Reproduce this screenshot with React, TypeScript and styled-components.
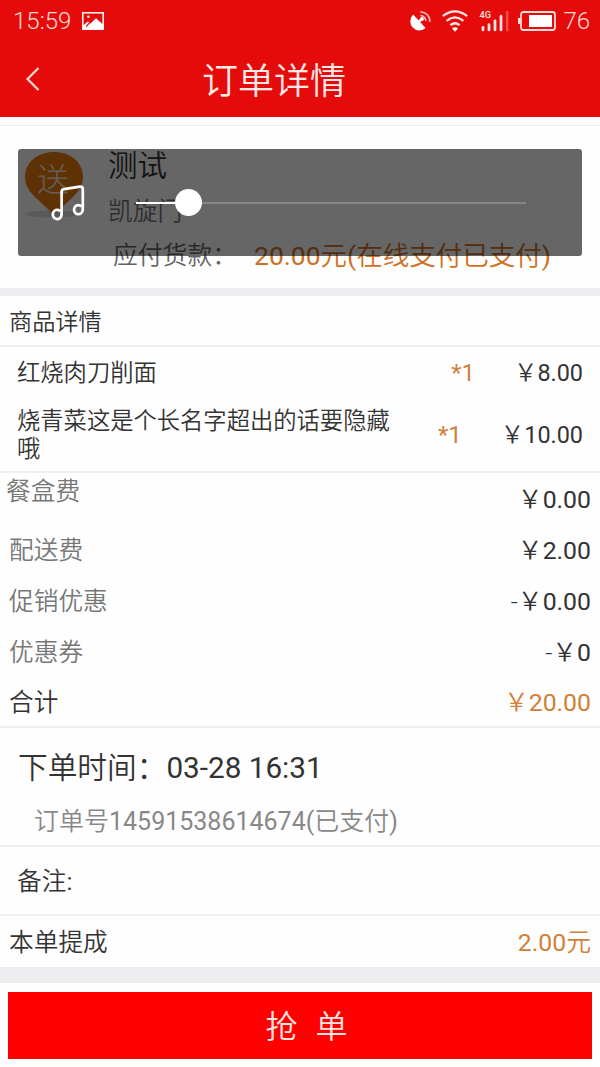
import React from "react";
import styled, { createGlobalStyle } from "styled-components";

const GlobalStyle = createGlobalStyle`
  * { box-sizing: border-box; }
  body {
    margin: 0;
    background: #fefefe;
    font-family: Roboto, "Noto Sans CJK SC", sans-serif;
    font-weight: 350;
    color: #333;
  }
`;

const Screen = styled.main`
  width: 600px;
  height: 1067px;
  display: flex;
  flex-direction: column;
  overflow: hidden;
`;

const Header = styled.header`
  height: 117px;
  flex: none;
  background: #e60b0b;
  color: #ffe9e6;
`;

const StatusBar = styled.div`
  height: 42px;
  display: flex;
  align-items: center;
  padding: 0 10px 0 13px;
`;

const StatusText = styled.span<{ $gap?: number }>`
  font-size: 24px;
  line-height: 42px;
  font-weight: 300;
  margin-left: ${(p) => p.$gap ?? 0}px;
  color: #ffdcd8;
`;

const StatusIcons = styled.div`
  display: flex;
  align-items: center;
  margin-left: auto;
`;

const Icon = styled.svg<{ $left?: number }>`
  display: block;
  flex: none;
  overflow: visible;
  margin-left: ${(p) => p.$left ?? 0}px;
`;

const TitleBar = styled.div`
  height: 75px;
  display: grid;
  grid-template-columns: 100px 1fr 152px;
  align-items: center;
  padding-bottom: 2px;
`;

const Title = styled.h1`
  margin: 0;
  padding-top: 7px;
  text-align: center;
  font-size: 36px;
  line-height: 66px;
  font-weight: 350;
`;

const Customer = styled.section`
  height: 163px;
  flex: none;
  margin-top: 8px;
  border-top: 1px solid #ebebf0;
  position: relative;
  display: grid;
  grid-template-columns: 108px 1fr;
`;

const PinCell = styled.div`
  padding: 25px 0 0 24px;
`;

const CustomerInfo = styled.div`
  display: flex;
  flex-direction: column;
  padding-top: 20px;
`;

const Text = styled.div<{ $size: number; $height: number; $color?: string; $indent?: number }>`
  font-size: ${(p) => p.$size}px;
  line-height: ${(p) => p.$height}px;
  color: ${(p) => p.$color ?? "#333"};
  padding-left: ${(p) => p.$indent ?? 0}px;
  white-space: nowrap;
`;

const Digits = styled.span`
  font-weight: 400;
`;

const Due = styled.div`
  display: flex;
  margin-top: 1px;
`;

const VolumePanel = styled.div`
  position: absolute;
  left: 18px;
  top: 23px;
  width: 564px;
  height: 107px;
  border-radius: 3px;
  background: rgba(0, 0, 0, 0.6);
  display: flex;
  align-items: center;
  padding-left: 33px;
`;

const Track = styled.div`
  width: 390px;
  height: 2px;
  margin-left: 51px;
  background: #858585;
  display: flex;
  align-items: center;
`;

const Filled = styled.div`
  width: 39px;
  height: 2px;
  background: #fff;
`;

const Knob = styled.div`
  width: 27px;
  height: 27px;
  border-radius: 50%;
  background: #fff;
`;

const Band = styled.div<{ $height: number }>`
  height: ${(p) => p.$height}px;
  flex: none;
  background: #eeeef1;
`;

const Section = styled.section<{ $height: number; $line?: boolean }>`
  height: ${(p) => p.$height}px;
  flex: none;
  border-bottom: ${(p) => (p.$line === false ? "none" : "2px solid #efefef")};
`;

const Item = styled.div<{ $height: number }>`
  height: ${(p) => p.$height}px;
  display: flex;
  align-items: center;
  padding: 0 17px;
`;

const ItemName = styled.div`
  width: 388px;
  font-size: 23.3px;
  line-height: 28px;
`;

const Quantity = styled.div`
  margin-left: auto;
  font-size: 24px;
  line-height: 28px;
  font-weight: 400;
  color: #cf8141;
`;

const ItemPrice = styled.div`
  margin-left: 39px;
  font-size: 23.4px;
  line-height: 28px;
`;

const Row = styled.div<{ $height: number; $left?: number }>`
  height: ${(p) => p.$height}px;
  display: flex;
  align-items: center;
  justify-content: space-between;
  padding: 0 9px 0 ${(p) => p.$left ?? 9}px;
`;

const Label = styled.span<{ $dark?: boolean; $raise?: number }>`
  font-size: 24.7px;
  line-height: 30px;
  color: ${(p) => (p.$dark ? "#333" : "#777")};
  padding-bottom: ${(p) => p.$raise ?? 0}px;
`;

const Amount = styled.span<{ $accent?: boolean }>`
  font-size: 24.8px;
  line-height: 30px;
  color: ${(p) => (p.$accent ? "#d08038" : "#333")};
`;

const GrabButton = styled.button`
  width: 584px;
  height: 67px;
  flex: none;
  margin: 9px 8px 0;
  padding: 4px 0 0 13px;
  border: 0;
  background: #fe0000;
  color: #ffe5e2;
  font: 350 32px/63px Roboto, "Noto Sans CJK SC", sans-serif;
  word-spacing: 10px;
`;

const items = [
  { name: "红烧肉刀削面", count: "*1", price: "8.00", height: 51 },
  { name: "烧青菜这是个长名字超出的话要隐藏哦", count: "*1", price: "10.00", height: 74 },
];

const fees = [
  { label: "配送费", sign: "", amount: "2.00" },
  { label: "促销优惠", sign: "-", amount: "0.00" },
  { label: "优惠券", sign: "-", amount: "0" },
];

const PictureIcon = () => (
  <Icon $left={11} width="22" height="18" viewBox="0 0 22 18">
    <rect x="0.8" y="0.8" width="20.4" height="16.4" fill="none" stroke="#fff" strokeWidth="1.5" />
    <circle cx="6.4" cy="4.8" r="1.3" fill="#ffe4e0" />
    <path d="M1 17V13.6L6 9.4L8.5 11.5L14 6.2L21 12.6V17Z" fill="#fff" />
    <path d="M4.2 14.5L8 10.4" stroke="#e60b0b" strokeWidth="1.3" />
  </Icon>
);

const SatelliteIcon = () => (
  <Icon width="21" height="21" viewBox="0 0 21 21">
    <path d="M3.2 3.6A9 9 0 1 0 15.6 17Z" fill="#fff" />
    <path d="M8.5 11L12 7.8" stroke="#fff" strokeWidth="2.4" />
    <circle cx="12" cy="8" r="1.9" fill="#fff" />
    <path d="M10.5 4.4A5.6 5.6 0 0 1 15.8 10M10.3 0.9A9 9 0 0 1 19.8 10.8" fill="none" stroke="#ffc3be" strokeWidth="1.5" />
  </Icon>
);

const WifiIcon = () => (
  <Icon $left={11} width="26" height="22" viewBox="0 0 26 22">
    <g fill="none" stroke="#ffe7e4" strokeWidth="2.3">
      <path d="M0.8 6.2Q13 -3.4 25.2 6.2" />
      <path d="M4.6 10.8Q13 4 21.4 10.8" />
      <path d="M8.4 15.2Q13 11.4 17.6 15.2" />
    </g>
    <path d="M10 18.4Q13 16.2 16 18.4L13 21.8Z" fill="#fff" />
  </Icon>
);

const SignalIcon = () => (
  <Icon $left={12} width="29" height="22" viewBox="0 0 29 22">
    <text x="-0.5" y="8" fontSize="9.2" fontWeight="500" fill="#ffe7e4">4G</text>
    <g stroke="#ffe7e4" strokeWidth="2.7" strokeLinecap="round">
      <path d="M3 17.3V20M9 14.5V20M15 10.8V20M21 6.2V20" />
    </g>
    <path d="M27.2 1V21.3" stroke="#f1504a" strokeWidth="2.4" />
  </Icon>
);

const BatteryIcon = () => (
  <Icon $left={9} width="38" height="20" viewBox="0 0 38 20">
    <rect x="3" y="1" width="34" height="18" rx="2.5" fill="none" stroke="#ffdcd8" strokeWidth="1.8" />
    <path d="M1 7V13" stroke="#ffdcd8" strokeWidth="2" />
    <rect x="11" y="4" width="23" height="12" fill="#fff" />
  </Icon>
);

const BackIcon = () => (
  <Icon $left={26} width="14" height="24" viewBox="0 0 14 24">
    <path d="M12.5 1L1.5 12L12.5 23" fill="none" stroke="#ffd8d4" strokeWidth="2.2" />
  </Icon>
);

const PinIcon = () => (
  <Icon width="60" height="70" viewBox="0 0 60 70">
    <ellipse cx="28" cy="63" rx="27" ry="3.5" fill="#dedede" />
    <path d="M1 26C1 11 14 1 30 1S59 11 59 26C59 34 55 40 49 46L34 60Q30 64 26 60L11 46C5 40 1 34 1 26Z" fill="#ea7d0c" />
    <text x="13" y="40" fontSize="32" fontWeight="300" fill="#f9ead8">送</text>
  </Icon>
);

const MusicIcon = () => (
  <Icon width="34" height="36" viewBox="0 0 34 36">
    <g fill="none" stroke="#fff" strokeWidth="2.7" strokeLinejoin="round" strokeLinecap="round">
      <path d="M10.6 29V7Q10.6 4.5 13 4.1L29 1.7Q31.8 1.4 31.8 4V24.4" />
      <path d="M10.6 29.6A4.4 4.6 0 1 1 8.6 25.6" />
      <path d="M31.8 24.8A4.4 4.6 0 1 1 29.8 20.8" />
    </g>
  </Icon>
);

export default function App() {
  return (
    <Screen>
      <GlobalStyle />
      <Header>
        <StatusBar>
          <StatusText>15:59</StatusText>
          <PictureIcon />
          <StatusIcons>
            <SatelliteIcon />
            <WifiIcon />
            <SignalIcon />
            <BatteryIcon />
          </StatusIcons>
          <StatusText $gap={7}>76</StatusText>
        </StatusBar>
        <TitleBar>
          <BackIcon />
          <Title>订单详情</Title>
        </TitleBar>
      </Header>

      <Customer>
        <PinCell>
          <PinIcon />
        </PinCell>
        <CustomerInfo>
          <Text $size={29.5} $height={40}>测试</Text>
          <Text $size={24.8} $height={52} $color="#777">凯旋门</Text>
          <Due>
            <Text $size={24.8} $height={34} $color="#666" $indent={5}>应付货款：</Text>
            <Text $size={26.5} $height={34} $color="#d07024" $indent={17}>
              <Digits>20.00</Digits>元<Digits>(</Digits>在线支付已支付<Digits>)</Digits>
            </Text>
          </Due>
        </CustomerInfo>
        <VolumePanel>
          <MusicIcon />
          <Track>
            <Filled />
            <Knob />
          </Track>
        </VolumePanel>
      </Customer>

      <Band $height={8} />
      <Section $height={51}>
        <Text $size={23.2} $height={52} $indent={9}>商品详情</Text>
      </Section>
      <Section $height={126}>
        {items.map((item) => (
          <Item key={item.name} $height={item.height}>
            <ItemName>{item.name}</ItemName>
            <Quantity>{item.count}</Quantity>
            <ItemPrice>￥<Digits>{item.price}</Digits></ItemPrice>
          </Item>
        ))}
      </Section>
      <Section $height={255}>
        <Row $height={53} $left={6}>
          <Label $raise={15}>餐盒费</Label>
          <Amount>￥<Digits>0.00</Digits></Amount>
        </Row>
        {fees.map((fee) => (
          <Row key={fee.label} $height={50.7}>
            <Label>{fee.label}</Label>
            <Amount>{fee.sign}￥<Digits>{fee.amount}</Digits></Amount>
          </Row>
        ))}
        <Row $height={50}>
          <Label $dark>合计</Label>
          <Amount $accent>￥<Digits>20.00</Digits></Amount>
        </Row>
      </Section>
      <Section $height={119}>
        <Text $size={29.7} $height={80} $indent={18}>下单时间：<Digits>03-28 16:31</Digits></Text>
        <Text $size={25} $height={28} $color="#888" $indent={34}>
          订单号<Digits>14591538614674(</Digits>已支付<Digits>)</Digits>
        </Text>
      </Section>
      <Section $height={69}>
        <Text $size={24.7} $height={70} $indent={17}>备注<Digits>:</Digits></Text>
      </Section>
      <Section $height={51} $line={false}>
        <Row $height={54}>
          <Label $dark>本单提成</Label>
          <Amount $accent><Digits>2.00</Digits>元</Amount>
        </Row>
      </Section>
      <Band $height={16} />
      <GrabButton>抢 单</GrabButton>
    </Screen>
  );
}
